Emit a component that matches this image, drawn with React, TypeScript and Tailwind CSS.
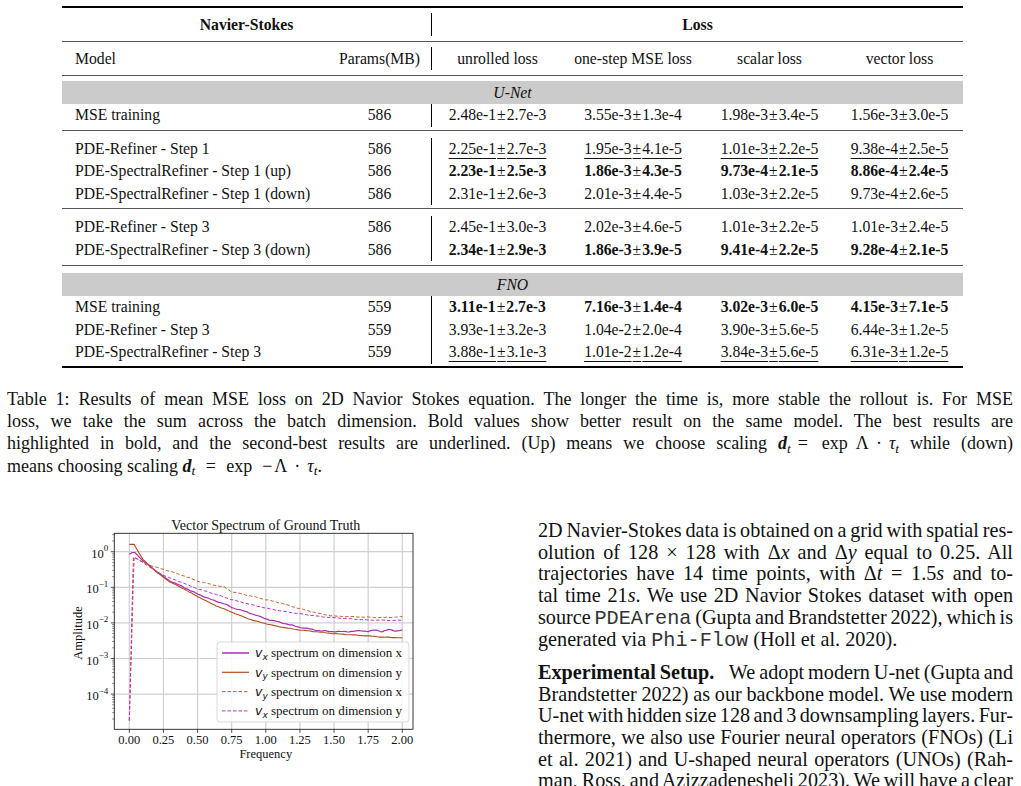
import React from 'react';

type Row = { model: string; params: string; vals: string[]; style?: 'b' | 'u' };

const WIDTHS = ['w-[131px]', 'w-[140px]', 'w-[133px]', 'w-[127px]'];

const unet: Row[][] = [
  [{ model: 'MSE training', params: '586', vals: ['2.48e-1±2.7e-3', '3.55e-3±1.3e-4', '1.98e-3±3.4e-5', '1.56e-3±3.0e-5'] }],
  [
    { model: 'PDE-Refiner - Step 1', params: '586', vals: ['2.25e-1±2.7e-3', '1.95e-3±4.1e-5', '1.01e-3±2.2e-5', '9.38e-4±2.5e-5'], style: 'u' },
    { model: 'PDE-SpectralRefiner - Step 1 (up)', params: '586', vals: ['2.23e-1±2.5e-3', '1.86e-3±4.3e-5', '9.73e-4±2.1e-5', '8.86e-4±2.4e-5'], style: 'b' },
    { model: 'PDE-SpectralRefiner - Step 1 (down)', params: '586', vals: ['2.31e-1±2.6e-3', '2.01e-3±4.4e-5', '1.03e-3±2.2e-5', '9.73e-4±2.6e-5'] },
  ],
  [
    { model: 'PDE-Refiner - Step 3', params: '586', vals: ['2.45e-1±3.0e-3', '2.02e-3±4.6e-5', '1.01e-3±2.2e-5', '1.01e-3±2.4e-5'] },
    { model: 'PDE-SpectralRefiner - Step 3 (down)', params: '586', vals: ['2.34e-1±2.9e-3', '1.86e-3±3.9e-5', '9.41e-4±2.2e-5', '9.28e-4±2.1e-5'], style: 'b' },
  ],
];

const fno: Row[] = [
  { model: 'MSE training', params: '559', vals: ['3.11e-1±2.7e-3', '7.16e-3±1.4e-4', '3.02e-3±6.0e-5', '4.15e-3±7.1e-5'], style: 'b' },
  { model: 'PDE-Refiner - Step 3', params: '559', vals: ['3.93e-1±3.2e-3', '1.04e-2±2.0e-4', '3.90e-3±5.6e-5', '6.44e-3±1.2e-5'] },
  { model: 'PDE-SpectralRefiner - Step 3', params: '559', vals: ['3.88e-1±3.1e-3', '1.01e-2±1.2e-4', '3.84e-3±5.6e-5', '6.31e-3±1.2e-5'], style: 'u' },
];

function Value({ text, style }: { text: string; style?: 'b' | 'u' }) {
  const [m, s] = text.split('±');
  const w = style === 'b' ? 'font-bold' : '';
  return (
    <span className={style === 'u' ? 'underline decoration-1 underline-offset-[4px]' : ''}>
      <span className={w}>{m}</span>
      <span className="mx-[1px]">±</span>
      <span className={w}>{s}</span>
    </span>
  );
}

function DataRow({ r }: { r: Row }) {
  return (
    <div className="flex h-[22.5px] items-center whitespace-nowrap">
      <div className="w-[266px] pl-[13px]">{r.model}</div>
      <div className="w-[103px] text-center">{r.params}</div>
      <div className="w-px self-stretch bg-black" />
      {r.vals.map((v, i) => (
        <div key={i} className={`${WIDTHS[i]} text-center`}>
          <Value text={v} style={r.style} />
        </div>
      ))}
    </div>
  );
}

function Band({ label }: { label: string }) {
  return <div className="flex h-[23px] items-center justify-center bg-[#cbcbcb] italic">{label}</div>;
}

function ResultsTable() {
  return (
    <div className="ml-[62px] w-[901px] pt-[6px] text-[15.7px] leading-none">
      <div className="h-[2px] bg-black" />
      <div className="flex h-[33px] items-center font-bold">
        <div className="w-[369px] text-center">Navier-Stokes</div>
        <div className="my-[5px] w-px self-stretch bg-black" />
        <div className="flex-1 text-center">Loss</div>
      </div>
      <div className="h-px bg-[#555]" />
      <div className="flex h-[33px] items-center whitespace-nowrap">
        <div className="w-[266px] pl-[13px]">Model</div>
        <div className="w-[103px] text-center">Params(MB)</div>
        <div className="my-[5px] w-px self-stretch bg-black" />
        <div className="w-[131px] text-center">unrolled loss</div>
        <div className="w-[140px] text-center">one-step MSE loss</div>
        <div className="w-[133px] text-center">scalar loss</div>
        <div className="w-[127px] text-center">vector loss</div>
      </div>
      <div className="h-px bg-[#555]" />
      <div className="h-[5px]" />
      <Band label="U-Net" />
      <DataRow r={unet[0][0]} />
      <div className="pt-[3.5px] pb-[6.5px]">
        <div className="h-px bg-[#555]" />
      </div>
      {unet[1].map((r) => (
        <DataRow key={r.model} r={r} />
      ))}
      <div className="pt-[3px] pb-[7px]">
        <div className="h-px bg-[#555]" />
      </div>
      {unet[2].map((r) => (
        <DataRow key={r.model} r={r} />
      ))}
      <div className="pt-[3.5px] pb-[7.5px]">
        <div className="h-px bg-[#555]" />
      </div>
      <Band label="FNO" />
      {fno.map((r) => (
        <DataRow key={r.model} r={r} />
      ))}
      <div className="pt-[2.5px]">
        <div className="h-[2px] bg-black" />
      </div>
    </div>
  );
}

// d_t = exp ±Λ·τ_t, spaced like TeX math
function Dt({ minus }: { minus?: boolean }) {
  return (
    <span className="whitespace-nowrap">
      <span className="font-bold italic">d</span>
      <sub className="italic">t</sub>
      <span className="mx-[7px] inline-block w-[17px] text-center">=</span>
      <span className="inline-block w-[30px]">exp</span>
      {minus ? <span className="ml-[4px] inline-block w-[14px] text-center">−</span> : <span className="ml-[4px]" />}
      Λ
      <span className="mx-[7px]">·</span>
      <span className="italic">τ</span>
      <sub className="italic">t</sub>
    </span>
  );
}

function Caption() {
  const j = 'text-justify [text-align-last:justify] [word-spacing:-1px]';
  return (
    <div className="mt-[19.6px] ml-[7px] w-[1006px] text-[18px] leading-[22.4px]">
      <div className={j}>
        Table 1: Results of mean MSE loss on 2D Navior Stokes equation. The longer the time is, more stable the rollout is. For MSE
      </div>
      <div className={j}>
        loss, we take the sum across the batch dimension. Bold values show better result on the same model. The best results are
      </div>
      <div className={j}>
        highlighted in bold, and the second-best results are underlined. (Up) means we choose scaling <Dt /> while (down)
      </div>
      <div>
        means choosing scaling <Dt minus />.
      </div>
    </div>
  );
}

const X = (f: number) => 69.3 + 136.5 * f;
const Y = (v: number) => 41.7 - 35.6 * Math.log10(v);

function curve(pts: [number, number][], jitter: number, seed: number) {
  const out: string[] = [];
  for (let i = 0; i < pts.length - 1; i++) {
    const [f0, v0] = pts[i];
    const [f1, v1] = pts[i + 1];
    const n = Math.max(1, Math.round((f1 - f0) / 0.0125));
    for (let k = 0; k < n; k++) {
      const t = k / n;
      const f = f0 + (f1 - f0) * t;
      let l = Math.log10(v0) + (Math.log10(v1) - Math.log10(v0)) * t;
      if (f > 0.08) l += jitter * (Math.sin(f * 53 + seed) * 0.6 + Math.sin(f * 131 + seed * 2) * 0.4);
      out.push(`${X(f).toFixed(1)},${Y(10 ** l).toFixed(1)}`);
    }
  }
  const [fl, vl] = pts[pts.length - 1];
  out.push(`${X(fl).toFixed(1)},${Y(vl).toFixed(1)}`);
  return 'M' + out.join('L');
}

const vxX = curve(
  [[0, 0.85], [0.02, 0.95], [0.04, 0.95], [0.06, 0.8], [0.1, 0.55], [0.15, 0.4], [0.2, 0.28], [0.25, 0.2], [0.3, 0.15], [0.4, 0.1], [0.5, 0.065], [0.6, 0.045], [0.7, 0.034], [0.75, 0.027], [0.8, 0.024], [0.9, 0.018], [1.0, 0.013], [1.1, 0.0105], [1.25, 0.0075], [1.4, 0.006], [1.5, 0.0057], [1.6, 0.0057], [1.7, 0.006], [1.75, 0.0058], [1.8, 0.0063], [1.85, 0.0057], [1.9, 0.0065], [1.95, 0.0059], [2.0, 0.0064]],
  0.012, 1,
);
const vyY = curve(
  [[0, 1.6], [0.035, 1.6], [0.06, 1.1], [0.1, 0.6], [0.15, 0.4], [0.2, 0.27], [0.25, 0.19], [0.3, 0.14], [0.4, 0.09], [0.5, 0.055], [0.6, 0.035], [0.75, 0.02], [0.9, 0.012], [1.0, 0.0095], [1.1, 0.0078], [1.25, 0.0063], [1.4, 0.0055], [1.5, 0.005], [1.6, 0.0047], [1.75, 0.0043], [1.85, 0.004], [2.0, 0.0038]],
  0.006, 2,
);
const vyX = curve(
  [[0, 1.8e-5], [0.035, 0.7], [0.06, 0.62], [0.1, 0.5], [0.15, 0.42], [0.2, 0.36], [0.25, 0.32], [0.3, 0.28], [0.4, 0.21], [0.5, 0.15], [0.6, 0.12], [0.7, 0.1], [0.75, 0.075], [0.85, 0.062], [1.0, 0.045], [1.1, 0.037], [1.25, 0.025], [1.4, 0.018], [1.5, 0.0155], [1.6, 0.015], [1.75, 0.0145], [1.85, 0.014], [2.0, 0.015]],
  0.01, 3,
);
const vxY = curve(
  [[0, 1.8e-5], [0.03, 0.7], [0.05, 0.65], [0.1, 0.5], [0.15, 0.37], [0.2, 0.28], [0.25, 0.22], [0.3, 0.18], [0.4, 0.13], [0.5, 0.09], [0.6, 0.07], [0.75, 0.045], [0.9, 0.032], [1.0, 0.026], [1.1, 0.022], [1.25, 0.018], [1.4, 0.015], [1.5, 0.014], [1.75, 0.012], [2.0, 0.0118]],
  0.008, 4,
);

// axes box, in svg coords (svg sits at page x 60, y 510)
const L = 54.3;
const R = 353;
const T = 23.3;
const B = 219.3;

function SpectrumChart() {
  const xt = [0, 0.25, 0.5, 0.75, 1, 1.25, 1.5, 1.75, 2];
  const yt = [0, -1, -2, -3, -4];
  const minor: number[] = [];
  for (let k = -5; k <= 0; k++) {
    for (let m = 2; m <= 9; m++) {
      const y = Y(m * 10 ** k);
      if (y > T && y < B) minor.push(y);
    }
  }
  const legend = [
    { d: 'x', c: '#c45fcc', w: 2, dash: '', sub: 'x' },
    { d: 'y', c: '#b24d22', w: 1.2, dash: '', sub: 'y' },
    { d: 'x', c: '#c0602a', w: 1, dash: '3.5 2', sub: 'y' },
    { d: 'y', c: '#b82cc0', w: 1, dash: '3.5 2', sub: 'x' },
  ];
  return (
    <svg width="365" height="265" viewBox="0 0 365 265" className="block">
      <g fontFamily="'Liberation Serif', serif" fill="#111">
        <text x="205.8" y="19.8" fontSize="14" textAnchor="middle">
          Vector Spectrum of Ground Truth
        </text>
        {xt.map((f) => (
          <line key={'gx' + f} x1={X(f)} x2={X(f)} y1={T} y2={B} stroke="#d0d0d0" strokeWidth="1.2" />
        ))}
        {yt.map((k) => (
          <line key={'gy' + k} x1={L} x2={R} y1={Y(10 ** k)} y2={Y(10 ** k)} stroke="#d0d0d0" strokeWidth="1.2" />
        ))}
        <g fill="none" strokeLinejoin="round">
          <path d={vxX} stroke="#a82cb4" strokeWidth="1.2" />
          <path d={vyY} stroke="#b24d22" strokeWidth="1.1" />
          <path d={vyX} stroke="#c0602a" strokeWidth="1" strokeDasharray="3.5 2" />
          <path d={vxY} stroke="#b82cc0" strokeWidth="1" strokeDasharray="3.5 2" />
        </g>
        <rect x={L} y={T} width={R - L} height={B - T} fill="none" stroke="#222" strokeWidth="0.9" />
        {xt.map((f) => (
          <g key={'xt' + f}>
            <line x1={X(f)} x2={X(f)} y1={B} y2={B + 3.5} stroke="#222" strokeWidth="0.8" />
            <text x={X(f)} y="234" fontSize="12.5" textAnchor="middle">
              {f.toFixed(2)}
            </text>
          </g>
        ))}
        {minor.map((y, i) => (
          <line key={'mn' + i} x1={L - 2} x2={L} y1={y} y2={y} stroke="#222" strokeWidth="0.6" />
        ))}
        {yt.map((k) => (
          <g key={'yt' + k}>
            <line x1={L - 3.5} x2={L} y1={Y(10 ** k)} y2={Y(10 ** k)} stroke="#222" strokeWidth="0.8" />
            <text x={L - 6} y={Y(10 ** k) + 6} fontSize="12.5" textAnchor="end">
              10
              <tspan fontSize="9" dy="-6.5">
                {k === 0 ? '0' : '−' + -k}
              </tspan>
            </text>
          </g>
        ))}
        <text x="205.8" y="247.5" fontSize="12.5" textAnchor="middle">
          Frequency
        </text>
        <text x="18.3" y="123" fontSize="12.5" textAnchor="middle" dominantBaseline="central" transform="rotate(-90 18.3 123)">
          Amplitude
        </text>
        <rect x="157" y="132" width="192" height="80" rx="3" fill="#fff" fillOpacity="0.85" stroke="#cfcfcf" strokeWidth="0.8" />
        {legend.map((g, i) => {
          const y = 143 + i * 19.3;
          return (
            <g key={i}>
              <line x1="162" x2="189" y1={y} y2={y} stroke={g.c} strokeWidth={g.w} strokeDasharray={g.dash || undefined} />
              <text x="195" y={y + 4.4} fontSize="13">
                <tspan fontFamily="'DejaVu Sans', sans-serif" fontStyle="italic" fontSize="12.5">
                  v
                </tspan>
                <tspan fontFamily="'DejaVu Sans', sans-serif" fontStyle="italic" fontSize="9" dy="2.5">
                  {g.sub}
                </tspan>
                <tspan dy="-2.5"> spectrum on dimension {g.d}</tspan>
              </text>
            </g>
          );
        })}
      </g>
    </svg>
  );
}

function BodyText() {
  const j = 'text-justify [text-align-last:justify] [word-spacing:-2px]';
  const mono = "font-['Liberation_Mono',monospace] text-[#333]";
  return (
    <div className="w-[475px] pt-[9.85px] text-[20.2px] leading-[21.7px]">
      <div className={j}>2D Navier-Stokes data is obtained on a grid with spatial res-</div>
      <div className={j}>
        olution of 128 × 128 with Δ<i>x</i> and Δ<i>y</i> equal to 0.25. All
      </div>
      <div className={j}>
        trajectories have 14 time points, with Δ<i>t</i> = 1.5<i>s</i> and to-
      </div>
      <div className={j}>
        tal time 21<i>s</i>. We use 2D Navior Stokes dataset with open
      </div>
      <div className={j}>
        source <span className={mono}>PDEArena</span> (Gupta and Brandstetter 2022), which is
      </div>
      <div>
        generated via <span className={mono}>Phi-Flow</span> (Holl et al. 2020).
      </div>
      <div className="mt-[9.9px] text-justify [text-align-last:justify] [word-spacing:-3px]">
        <span className="font-bold">Experimental Setup.</span>
        <span className="inline-block w-[11px]" /> We adopt modern U-net (Gupta and
      </div>
      <div className={j}>Brandstetter 2022) as our backbone model. We use modern</div>
      <div className={j}>U-net with hidden size 128 and 3 downsampling layers. Fur-</div>
      <div className={j}>thermore, we also use Fourier neural operators (FNOs) (Li</div>
      <div className={j}>et al. 2021) and U-shaped neural operators (UNOs) (Rah-</div>
      <div className={j}>man, Ross, and Azizzadenesheli 2023). We will have a clear</div>
    </div>
  );
}

export default function App() {
  return (
    <div className="h-[786px] w-[1021px] overflow-hidden bg-white font-['Liberation_Serif','Times_New_Roman',serif] text-[#111]">
      <ResultsTable />
      <Caption />
      <div className="mt-[32.8px] flex">
        <div className="w-[538px] pl-[60px]">
          <SpectrumChart />
        </div>
        <BodyText />
      </div>
    </div>
  );
}
